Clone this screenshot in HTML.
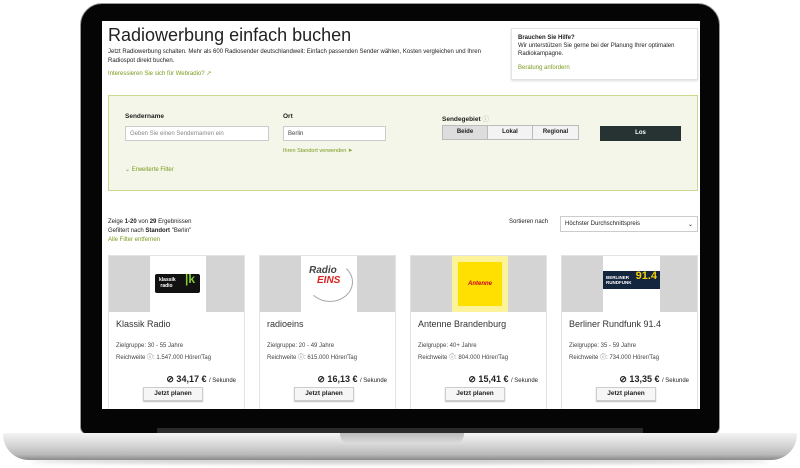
<!DOCTYPE html>
<html><head><meta charset="utf-8"><style>
*{box-sizing:border-box;margin:0;padding:0}
body{width:800px;height:468px;background:#fff;position:relative;overflow:hidden;font-family:"Liberation Sans",sans-serif;color:#222}
.lid{position:absolute;left:80px;top:3px;width:640px;height:432px;background:#050505;border-radius:22px 22px 8px 8px;border:1px solid #9a9a9a}
.strip{position:absolute;left:157px;top:428px;width:486px;height:6px;background:#2a2a2a}
.base{position:absolute;left:3px;top:433px;width:794px;height:27px;background:linear-gradient(#f4f4f4,#d9d9d9 40%,#b8b8b8 80%,#8a8a8a);border-radius:2px 2px 40px 40px}
.notch{position:absolute;left:340px;top:433px;width:124px;height:11px;background:linear-gradient(#bbb,#ddd);border-radius:0 0 10px 10px}
.shadow{position:absolute;left:30px;top:458px;width:740px;height:6px;background:#ccc;border-radius:50%;filter:blur(2px)}
.screen{position:absolute;left:102px;top:21px;width:598px;height:388px;background:#fff;overflow:hidden;font-size:6px}
.a{position:absolute}
.g{color:#7a9a1e}
.h1{left:6px;top:4px;font-size:18px;color:#222}
.help{left:409px;top:7px;width:187px;height:52px;border:1px solid #e2e2e2;box-shadow:0 1px 2px #ddd;padding:5px 6px;line-height:8px}
.panel{left:6px;top:74px;width:590px;height:96px;background:#f3f6e8;border:1px solid #c8da90}
.lbl{font-weight:bold;font-size:6.5px}
.inp{background:#fff;border:1px solid #ccc;height:15px;padding:4px 4px;color:#888}
.seg{top:104px;height:15px;border:1px solid #bbb;background:#f3f3f3;font-weight:bold;text-align:center;line-height:13px}
.card{top:234px;width:137px;height:160px;border:1px solid #e3e3e3;background:#fff}
.img{height:56px;background:#d4d4d4;position:relative}
.wc{position:absolute;left:41px;top:0;width:56px;height:56px;background:#fff}
.name{position:absolute;left:7px;top:63px;font-size:9px;color:#333}
.info{position:absolute;left:7px;top:84px;line-height:12px;font-size:6px;color:#444}
.price{position:absolute;right:8px;top:118px;font-size:9px;font-weight:bold;color:#222}
.price small{font-size:6px;font-weight:normal}
.btn{position:absolute;left:34px;top:131px;width:60px;height:14px;border:1px solid #ccc;background:#f6f6f6;box-shadow:0 1px 1px #bbb;font-weight:bold;text-align:center;line-height:12px;font-size:6.5px}
</style></head><body>
<div class="shadow"></div>
<div class="lid"></div>
<div class="strip"></div>
<div class="base"></div>
<div class="notch"></div>
<div class="screen">
<div class="a h1">Radiowerbung einfach buchen</div>
<div class="a" style="left:6px;top:27px;width:400px;line-height:9px">Jetzt Radiowerbung schalten. Mehr als 600 Radiosender deutschlandweit: Einfach passenden Sender wählen, Kosten vergleichen und Ihren Radiospot direkt buchen.</div>
<div class="a g" style="left:6px;top:49px">Interessieren Sie sich für Webradio? ↗</div>
<div class="a help"><b>Brauchen Sie Hilfe?</b><br>Wir unterstützen Sie gerne bei der Planung Ihrer optimalen Radiokampagne.<div class="g" style="margin-top:6px">Beratung anfordern</div></div>
<div class="a panel"></div>
<div class="a lbl" style="left:23px;top:92px">Sendername</div>
<div class="a inp" style="left:23px;top:105px;width:144px">Geben Sie einen Sendernamen ein</div>
<div class="a lbl" style="left:181px;top:92px">Ort</div>
<div class="a inp" style="left:181px;top:105px;width:103px;color:#444">Berlin</div>
<div class="a g" style="left:181px;top:127px;font-size:5.5px">Ihren Standort verwenden ➤</div>
<div class="a lbl" style="left:340px;top:92px">Sendegebiet <span style="font-weight:normal;color:#aaa">ⓘ</span></div>
<div class="a seg" style="left:340px;width:46px;background:#ddd">Beide</div>
<div class="a seg" style="left:385px;width:46px">Lokal</div>
<div class="a seg" style="left:430px;width:47px">Regional</div>
<div class="a" style="left:498px;top:105px;width:81px;height:15px;background:#263332;color:#fff;text-align:center;line-height:15px;font-weight:bold">Los</div>
<div class="a g" style="left:23px;top:145px">⌄ Erweiterte Filter</div>
<div class="a" style="left:6px;top:197px;line-height:9px">Zeige <b>1-20</b> von <b>29</b> Ergebnissen<br>Gefiltert nach <b>Standort</b> "Berlin"<br><span class="g">Alle Filter entfernen</span></div>
<div class="a" style="left:407px;top:198px">Sortieren nach</div>
<div class="a" style="left:458px;top:195px;width:138px;height:16px;border:1px solid #ccc;padding:4px 4px">Höchster Durchschnittspreis<span style="float:right">⌄</span></div>

<div class="a card" style="left:6px"><div class="img"><div class="wc"><div style="position:absolute;left:5px;top:18px;width:45px;height:19px;background:#111;border-radius:2px;color:#fff;font-size:5px;font-weight:bold;line-height:6px;padding:3px 4px">klassik<br>&nbsp;radio <span style="color:#8c3;font-size:12px;position:absolute;right:5px;top:2px">|k</span></div></div></div>
<div class="name">Klassik Radio</div><div class="info">Zielgruppe: 30 - 55 Jahre<br>Reichweite ⓘ: 1.547.000 Hörer/Tag</div><div class="price">⊘ 34,17 € <small>/ Sekunde</small></div><div class="btn">Jetzt planen</div></div>

<div class="a card" style="left:157px"><div class="img"><div class="wc"><div style="position:absolute;left:8px;top:10px;font:italic bold 10px 'Liberation Sans';color:#444;line-height:10px">Radio<br><span style="color:#d22;margin-left:8px">EINS</span></div><div style="position:absolute;left:6px;top:6px;width:46px;height:40px;border:1px solid #aaa;border-radius:50%;border-color:transparent #aaa #aaa transparent"></div></div></div>
<div class="name">radioeins</div><div class="info">Zielgruppe: 20 - 49 Jahre<br>Reichweite ⓘ: 615.000 Hörer/Tag</div><div class="price">⊘ 16,13 € <small>/ Sekunde</small></div><div class="btn">Jetzt planen</div></div>

<div class="a card" style="left:308px"><div class="img"><div class="wc" style="background:#fdf39a"><div style="position:absolute;left:6px;top:6px;width:44px;height:44px;background:#ffe000;color:#c02;font-size:6px;font-weight:bold;text-align:center;line-height:44px;font-style:italic">Antenne</div></div></div>
<div class="name">Antenne Brandenburg</div><div class="info">Zielgruppe: 40+ Jahre<br>Reichweite ⓘ: 804.000 Hörer/Tag</div><div class="price">⊘ 15,41 € <small>/ Sekunde</small></div><div class="btn">Jetzt planen</div></div>

<div class="a card" style="left:459px"><div class="img"><div class="wc" style="width:57px"><div style="position:absolute;left:0;top:15px;width:57px;height:18px;background:#14263e;color:#fff;font-size:4.5px;font-weight:bold;line-height:5px;padding:4px 3px">BERLINER<br>RUNDFUNK<span style="color:#f5d000;font-size:11px;position:absolute;right:3px;top:3px">91.4</span></div></div></div>
<div class="name">Berliner Rundfunk 91.4</div><div class="info">Zielgruppe: 35 - 59 Jahre<br>Reichweite ⓘ: 734.000 Hörer/Tag</div><div class="price">⊘ 13,35 € <small>/ Sekunde</small></div><div class="btn">Jetzt planen</div></div>
</div>
</body></html>
